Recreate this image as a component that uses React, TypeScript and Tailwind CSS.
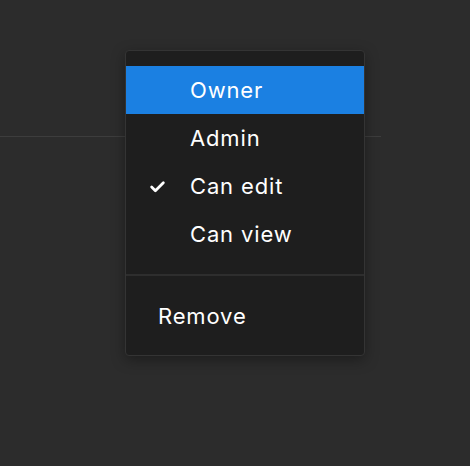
import React from "react";

function Check() {
  return (
    <svg width="17" height="17" viewBox="0 0 16 16" fill="none">
      <path d="M2.5 8.5 L6 12 L13.5 4.5" stroke="white" strokeWidth="2.6" strokeLinecap="round" strokeLinejoin="round" />
    </svg>
  );
}

export default function App() {
  const items = [
    { label: "Owner", active: true, checked: false },
    { label: "Admin", active: false, checked: false },
    { label: "Can edit", active: false, checked: true },
    { label: "Can view", active: false, checked: false },
  ];
  return (
    <div className="relative w-[470px] h-[466px] bg-[#2c2c2c] overflow-hidden" style={{ fontFamily: "Inter, 'Noto Sans', sans-serif" }}>
      <div className="pt-[136px]">
        <div className="w-[381px] h-px bg-[#3d3d3d]" />
      </div>
      <div className="absolute left-[125px] top-[50px] w-[240px] rounded-[4px] border border-[#343434] bg-[#1e1e1e] pt-[15px] pb-[15px] shadow-[0_4px_14px_rgba(0,0,0,0.35)]">
        {items.map((it) => (
          <div
            key={it.label}
            className={`relative flex h-[48px] items-center pl-[64px] text-[22px] text-white ${it.active ? "bg-[#1b80e2]" : ""}`}
          >
            {it.checked && (
              <span className="absolute left-[23px] top-[16px]">
                <Check />
              </span>
            )}
            <span className="tracking-[0.85px]">{it.label}</span>
          </div>
        ))}
        <div className="mt-[16px] mb-[16px] h-[2px] bg-[#2e2e2e]" />
        <div className="flex h-[48px] items-center pl-[32px] text-[22px] text-white">
          <span className="tracking-[0.85px]">Remove</span>
        </div>
      </div>
    </div>
  );
}
